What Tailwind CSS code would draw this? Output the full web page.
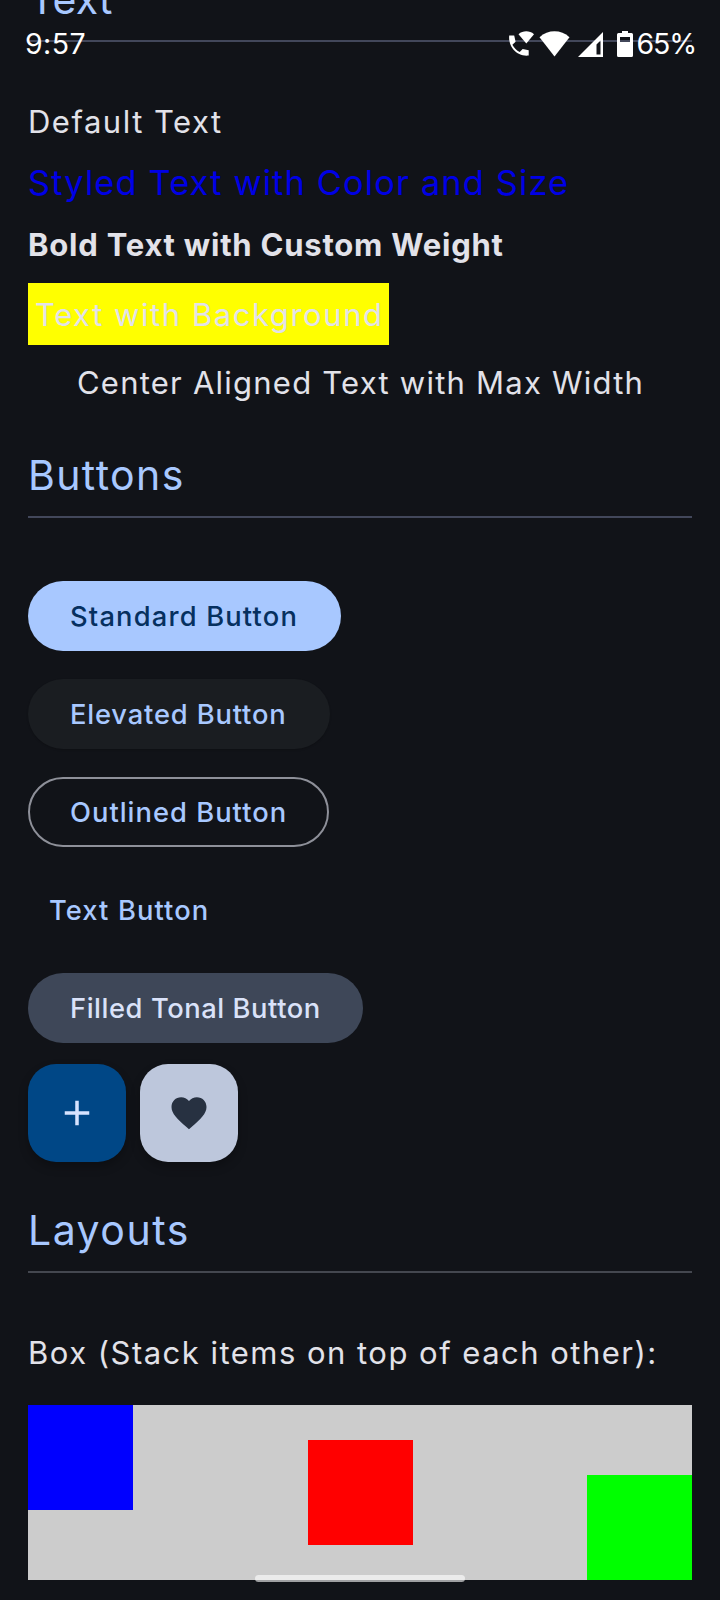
<!DOCTYPE html>
<html lang="en">
<head>
<meta charset="utf-8">
<title>Components</title>
<script src="https://cdn.jsdelivr.net/npm/@tailwindcss/browser@4"></script>
</head>
<body class="relative flex h-[1600px] w-[720px] flex-col overflow-hidden bg-[#111318] font-['Inter',sans-serif] text-[#e2e2e9]">
<header class="absolute inset-x-0 top-0 z-10 flex h-[88px] items-center justify-between pr-[24px] pl-[25px] text-[28.5px] leading-[88px] whitespace-nowrap text-white">
  <span class="tracking-[0.4px]">9:57</span>
  <div class="flex items-center">
    <svg class="mr-[5px] h-[28px] w-[28px]" viewBox="0 0 28 28" fill="#fff"><path d="M3.2 5.5h5l1.4 6.2-3.200 3.100c1.800 3.400 4.100 5.700 7.300 7.300l3-3.100 6 1.300v5.300C11.500 27 2 17 3.200 5.500z"/><path d="M12.500 4.200C17 .4 23.500 .4 28 4.200L20.300 13.500z"/></svg>
    <svg class="mr-[8px] h-[26px] w-[31px]" viewBox="0 0 31 26" fill="#fff"><path d="M.5 6.200C9-1.700 22-1.700 30.500 6.200L15.500 25.500z"/></svg>
    <svg class="mr-[13px] h-[26px] w-[26px]" viewBox="0 0 26 26" fill="#fff"><path fill-rule="evenodd" d="M0 26 25 1V26zM18.500 13.500V23.500H22.500V9.500z"/></svg>
    <svg class="mr-[4px] h-[26px] w-[16px]" viewBox="0 0 16 26" fill="#fff"><path fill-rule="evenodd" d="M5 0h6v2h3.500q1.500 0 1.500 1.500v21q0 1.500-1.500 1.500h-13Q0 26 0 24.500v-21Q0 2 1.500 2H5zM3 6v5h10V6z"/></svg>
    <span class="tracking-[-1.200px]">65%</span>
  </div>
</header>
<main class="-mt-7 flex shrink-0 flex-col items-start px-7 text-[31px] leading-[42px] whitespace-nowrap">
  <h2 class="h-[52px] pl-px text-[41px] leading-[54px] tracking-[0.2px] text-[#a8c8ff]">Text</h2>
  <div class="mt-4 h-[2px] w-full bg-[#42475a]"></div>
  <p class="mt-[59px] tracking-[1.5px]">Default Text</p>
  <p class="mt-[19px] text-[34.3px] tracking-[1.18px] text-[#0000e6]">Styled Text with Color and Size</p>
  <p class="mt-5 font-bold tracking-[0.78px]">Bold Text with Custom Weight</p>
  <p class="mt-[17px] h-[62px] w-[361px] bg-[#ffff00] pl-[7px] leading-[64px] tracking-[1.55px]">Text with Background</p>
  <p class="mt-[17px] pl-[49px] tracking-[1.23px]">Center Aligned Text with Max Width</p>
  <h2 class="mt-11 h-[52px] text-[41px] leading-[54px] tracking-[1.4px] text-[#a8c8ff]">Buttons</h2>
  <div class="mt-4 h-[2px] w-full bg-[#42475a]"></div>
  <div class="mt-[63px] flex flex-col items-start gap-7 text-[27.3px] leading-[72px] font-medium text-[#a8c8ff]">
    <button class="h-[70px] w-[313px] rounded-full bg-[#a8c8ff] pl-[42px] text-left tracking-[1.180px] text-[#06305f]">Standard Button</button>
    <button class="h-[70px] w-[302px] rounded-full bg-[#1a1d21] pl-[42px] text-left tracking-[0.84px] shadow-[0_1px_2px_rgba(0,0,0,0.2)]">Elevated Button</button>
    <button class="h-[70px] w-[301px] rounded-full border-2 border-[#8e9099] pl-10 text-left leading-[68px] tracking-[1.02px]">Outlined Button</button>
    <button class="h-[70px] pl-[21px] text-left tracking-[1.100px]">Text Button</button>
    <button class="h-[70px] w-[335px] rounded-full bg-[#3e4758] pl-[42px] text-left tracking-[0.57px] text-[#dae2f9]">Filled Tonal Button</button>
  </div>
  <div class="mt-[21px] flex gap-[14px]">
    <button class="flex size-[98px] items-center justify-center rounded-[28px] bg-[#004786] shadow-[0_5px_10px_rgba(0,0,0,0.25)]">
      <svg class="size-[42px]" viewBox="0 0 24 24" fill="#d6e3ff"><path d="M19 13h-6v6h-2v-6H5v-2h6V5h2v6h6z"/></svg>
    </button>
    <button class="flex size-[98px] items-center justify-center rounded-[28px] bg-[#bdc7dc] shadow-[0_5px_10px_rgba(0,0,0,0.25)]">
      <svg class="size-[42px]" viewBox="0 0 24 24" fill="#273141"><path d="m12 21.350-1.450-1.320C5.400 15.360 2 12.280 2 8.500 2 5.420 4.420 3 7.500 3c1.740 0 3.410.81 4.500 2.090C13.090 3.810 14.760 3 16.500 3 19.580 3 22 5.420 22 8.500c0 3.780-3.400 6.860-8.550 11.540L12 21.350z"/></svg>
    </button>
  </div>
  <h2 class="mt-[41px] h-[52px] text-[41px] leading-[54px] tracking-[1.5px] text-[#a8c8ff]">Layouts</h2>
  <div class="mt-4 h-[2px] w-full bg-[#44474f]"></div>
  <p class="mt-[59px] tracking-[1.48px]">Box (Stack items on top of each other):</p>
  <div class="mt-[31px] flex h-[175px] w-full justify-between bg-[#cccccc]">
    <div class="size-[105px] bg-[#0000ff]"></div>
    <div class="size-[105px] self-center bg-[#ff0000]"></div>
    <div class="size-[105px] self-end bg-[#00ff00]"></div>
  </div>
</main>
<div class="absolute top-[1575px] left-[255px] h-[7px] w-[210px] rounded-full bg-white/60"></div>
</body>
</html>
